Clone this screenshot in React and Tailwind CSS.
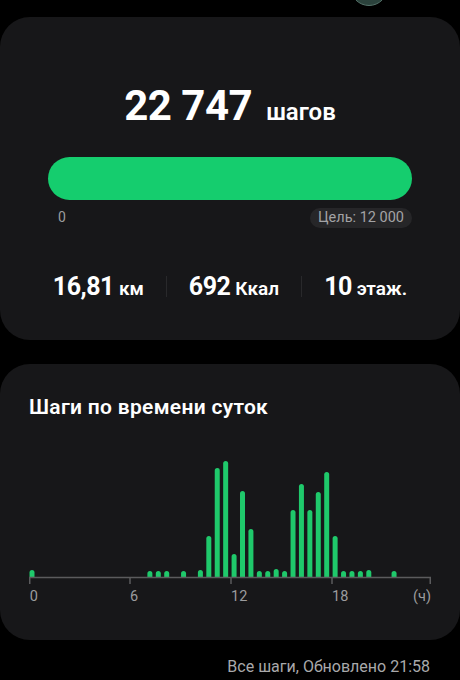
import React from 'react';

const font = { fontFamily: 'Roboto, "Noto Sans", sans-serif' };

// half-hour slots → bar height in px
const hourly = {
  0: 7, 14: 6, 15: 6, 16: 6, 18: 6, 20: 7, 21: 41, 22: 109, 23: 116, 24: 23,
  25: 86, 26: 48, 27: 6, 28: 6, 29: 8, 30: 6, 31: 67, 32: 93, 33: 67, 34: 85,
  35: 105, 36: 41, 37: 6, 38: 6, 39: 6, 40: 7, 43: 6,
};

const AXIS_Y = 123;
const STEP = 8.42;

const Bar = ({ slot, h }) => {
  const x = slot * STEP + 0.5;
  const w = 5;
  const r = 2.5;
  const top = AXIS_Y - h;
  return (
    <path
      d={`M${x},${AXIS_Y} V${top + r} A${r},${r} 0 0 1 ${x + w},${top + r} V${AXIS_Y} Z`}
      fill="#1fc96b"
    />
  );
};

const StepsChart = () => {
  const ticks = [
    { x: 0.75, label: '0' },
    { x: 101, label: '6' },
    { x: 202, label: '12' },
    { x: 303, label: '18' },
  ];
  return (
    <svg width="404" height="155" viewBox="0 0 404 155" className="block">
      {Object.entries(hourly).map(([slot, h]) => (
        <Bar key={slot} slot={Number(slot)} h={h} />
      ))}
      <line x1="0" y1={AXIS_Y + 0.5} x2="402" y2={AXIS_Y + 0.5} stroke="#5b5b5d" strokeWidth="1.5" />
      {[...ticks.map((t) => t.x), 401.25].map((x) => (
        <line key={x} x1={x} y1={AXIS_Y} x2={x} y2={AXIS_Y + 7} stroke="#5b5b5d" strokeWidth="1.5" />
      ))}
      {ticks.map((t) => (
        <text key={t.label} x={t.x} y="147" fill="#9c9c9e" fontSize="14.5" style={font}>
          {t.label}
        </text>
      ))}
      <text x="402" y="147" fill="#9c9c9e" fontSize="14.5" textAnchor="end" style={font}>
        (ч)
      </text>
    </svg>
  );
};

const Stat = ({ value, unit }) => (
  <div className="flex items-baseline gap-[5px]">
    <span className="text-[25px] font-bold leading-none tracking-[-0.5px] text-white">{value}</span>
    <span className="text-[19px] font-semibold leading-none text-white">{unit}</span>
  </div>
);

const App = () => {
  return (
    <div className="relative w-[460px] h-[680px] overflow-hidden bg-black" style={font}>
      {/* avatar peeking from the top */}
      <div className="absolute left-[350px] top-[-32px] h-[38px] w-[38px] rounded-full border-[1.5px] border-[#55736a] bg-[#2b423c]" />

      <div className="pt-[17px]">
        {/* Steps summary */}
        <div className="h-[323px] rounded-[30px] bg-[#171719]">
          <div className="flex items-baseline justify-center gap-[14px] pt-[68px]">
            <span className="text-[42px] font-bold leading-none tracking-[-0.5px] text-white">22 747</span>
            <span className="text-[24px] font-semibold leading-none text-white">шагов</span>
          </div>

          <div className="mx-[48px] mt-[30px] h-[43px] rounded-full bg-[#15cd6e]" />

          <div className="mx-[48px] mt-[7px] flex items-center justify-between">
            <span className="pl-[10px] text-[14px] text-[#9c9c9e]">0</span>
            <span className="flex h-[20px] items-center rounded-full bg-[#262628] px-[8px] text-[14.5px] text-[#a3a3a5]">
              Цель: 12 000
            </span>
          </div>

          <div className="mt-[46px] flex items-center justify-center gap-[22px]">
            <Stat value="16,81" unit="км" />
            <div className="h-[21px] w-px bg-[#29292b]" />
            <Stat value="692" unit="Ккал" />
            <div className="h-[21px] w-px bg-[#29292b]" />
            <Stat value="10" unit="этаж." />
          </div>
        </div>

        {/* Steps by time of day */}
        <div className="mt-[24px] h-[276px] rounded-[30px] bg-[#171719] px-[29px] pt-[31px]">
          <h2 className="text-[21px] font-semibold leading-[25px] tracking-[0.3px] text-white">Шаги по времени суток</h2>
          <div className="mt-[34px]">
            <StepsChart />
          </div>
        </div>

        <div className="pr-[30px] pt-[15px] text-right text-[16px] text-[#a9a9ab]">
          Все шаги, Обновлено 21:58
        </div>
      </div>
    </div>
  );
};

export default App;
